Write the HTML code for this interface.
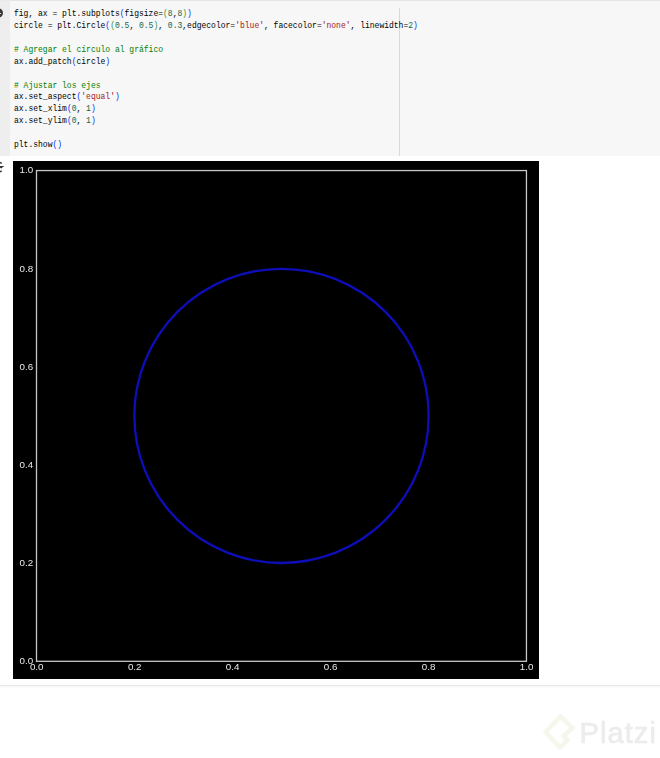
<!DOCTYPE html>
<html><head><meta charset="utf-8">
<style>
html,body{margin:0;padding:0;width:660px;height:758px;overflow:hidden;background:#fff;position:relative;}
.abs{position:absolute;}
#topband{left:10px;top:0;width:650px;height:1px;background:#e4e4e4;}
#topband2{left:0;top:0;width:10px;height:1px;background:#ebebeb;}
#gutter{left:0;top:1px;width:10px;height:155px;background:#eeeeee;}
#code{left:10px;top:1px;width:650px;height:155px;background:#f7f7f7;}
#ruler{left:399px;top:8px;width:1px;height:148px;background:#dadada;}
#runbtn{left:-7px;top:8.2px;width:10.3px;height:10.3px;border-radius:50%;background:#3a3a3a;}
#runbar{left:0;top:13px;width:1.2px;height:1.2px;background:#ddd;}
pre{margin:0;font-family:"Liberation Mono",monospace;font-size:8.8px;line-height:11.95px;transform:scaleX(0.9105);transform-origin:0 0;color:#000;white-space:pre;}
#src{left:14px;top:8.8px;}
.s{color:#a31515}.n{color:#116644}.c{color:#008000}.b1{color:#0431fa}.b2{color:#319331}
#fig{left:13px;top:161px;width:526px;height:518px;background:#000;}
#sep{left:0;top:685px;width:660px;height:1px;background:#e6e6e6;}
#sepsh{left:0;top:686px;width:660px;height:3px;background:linear-gradient(#f9f9f9,#fff);}
svg text{font-family:"Liberation Sans",sans-serif;font-size:9.8px;fill:#e8e8e8;}
</style></head><body>
<div id="topband" class="abs"></div><div id="topband2" class="abs"></div>
<div id="gutter" class="abs"></div>
<div id="code" class="abs"></div>
<div id="ruler" class="abs"></div>
<div id="runbtn" class="abs"></div><div id="runbar" class="abs"></div>
<pre id="src" class="abs">fig, ax = plt.subplots<span class="b1">(</span>figsize=<span class="b2">(</span><span class="n">8</span>,<span class="n">8</span><span class="b2">)</span><span class="b1">)</span>
circle = plt.Circle<span class="b1">(</span><span class="b2">(</span><span class="n">0.5</span>, <span class="n">0.5</span><span class="b2">)</span>, <span class="n">0.3</span>,edgecolor=<span class="s">'blue'</span>, facecolor=<span class="s">'none'</span>, linewidth=<span class="n">2</span><span class="b1">)</span>

<span class="c"># Agregar el círculo al gráfico</span>
ax.add_patch<span class="b1">(</span>circle<span class="b1">)</span>

<span class="c"># Ajustar los ejes</span>
ax.set_aspect<span class="b1">(</span><span class="s">'equal'</span><span class="b1">)</span>
ax.set_xlim<span class="b1">(</span><span class="n">0</span>, <span class="n">1</span><span class="b1">)</span>
ax.set_ylim<span class="b1">(</span><span class="n">0</span>, <span class="n">1</span><span class="b1">)</span>

plt.show<span class="b1">()</span></pre>
<svg class="abs" style="left:0;top:156px" width="12" height="20">
<path d="M-2 6.6 Q0.6 6 1.6 7.6" stroke="#333" stroke-width="1.5" fill="none"/>
<path d="M-2 10 L4.2 10 L1.2 12.6 Z" fill="#333"/>
<path d="M-2 15.9 Q0.6 16.2 1.6 14.6" stroke="#333" stroke-width="1.5" fill="none"/>
</svg>
<div id="fig" class="abs"></div>
<svg class="abs" style="left:0;top:0;will-change:transform" width="660" height="758">
<rect x="36.5" y="170.55" width="489.95" height="490.75" fill="none" stroke="#c6c6c6" stroke-width="1.3"/>
<circle cx="281.5" cy="415.9" r="147.1" fill="none" stroke="#0e0eb8" stroke-width="2.3"/>
<g text-anchor="end">
<text x="33.2" y="664.20">0.0</text>
<text x="33.2" y="566.05">0.2</text>
<text x="33.2" y="467.90">0.4</text>
<text x="33.2" y="369.75">0.6</text>
<text x="33.2" y="271.60">0.8</text>
<text x="33.2" y="173.45">1.0</text>
</g>
<g text-anchor="middle">
<text x="36.70" y="670.00">0.0</text>
<text x="134.69" y="670.00">0.2</text>
<text x="232.68" y="670.00">0.4</text>
<text x="330.67" y="670.00">0.6</text>
<text x="428.66" y="670.00">0.8</text>
<text x="526.65" y="670.00">1.0</text>
</g>
</svg>
<div id="sep" class="abs"></div><div id="sepsh" class="abs"></div>
<svg class="abs" style="left:538px;top:708px" width="122" height="48">
<path d="M25.5 28 L34.5 20 L22.5 8.5 L7.5 24 L22 39.5 L29.5 32 Z" fill="none" stroke="#f3f7ec" stroke-width="4.6" stroke-linejoin="round"/>
<text x="41.5" y="34.5" style="font-family:'Liberation Sans',sans-serif;font-size:29px;letter-spacing:1.1px;fill:#ececec;stroke:#ececec;stroke-width:0.7px;">Platzi</text>
</svg>

</body></html>
